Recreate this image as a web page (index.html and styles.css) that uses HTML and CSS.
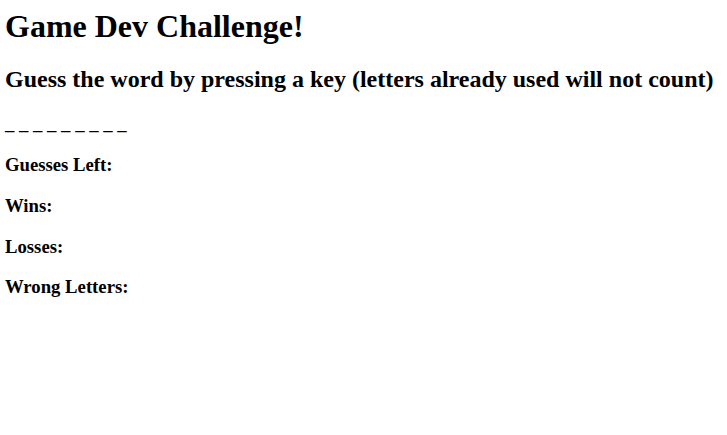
FILE: index.html
```html
<!DOCTYPE html>
<html>
<head>
<meta charset="utf-8">
<title>Game Dev Challenge</title>
<link rel="stylesheet" href="styles.css">
</head>
<body class="page">
<h1 class="title">Game Dev Challenge!</h1>
<h2 class="subtitle">Guess the word by pressing a key (letters already used will not count)</h2>
<h3 class="word">_ _ _ _ _ _ _ _ _</h3>
<h3 class="stat">Guesses Left:</h3>
<h3 class="stat">Wins:</h3>
<h3 class="stat">Losses:</h3>
<h3 class="stat">Wrong Letters:</h3>
</body>
</html>
```

FILE: styles.css
```css
.page {
  margin: 0;
  padding: 8px 5px;
  font-family: "Liberation Serif", "Times New Roman", serif;
  color: #000;
  background: #fff;
}

.title {
  margin-top: 0;
}
```
